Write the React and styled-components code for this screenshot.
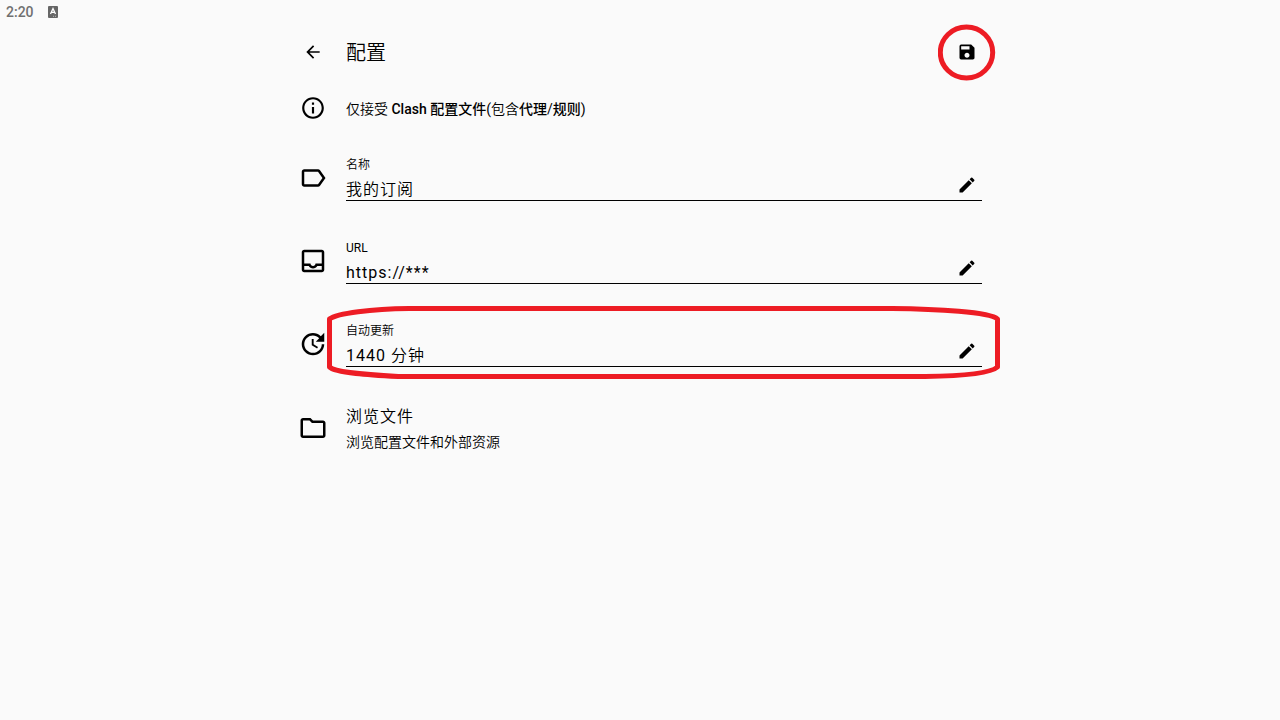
import React, { useState } from "react";
import styled, { createGlobalStyle } from "styled-components";
import {
  MdArrowBack,
  MdSave,
  MdInfoOutline,
  MdLabelOutline,
  MdUpdate,
  MdEdit,
} from "react-icons/md";

const GlobalStyle = createGlobalStyle`
  * { box-sizing: border-box; }
  body {
    margin: 0;
    background: #fafafa;
    color: #000;
    font-family: Roboto, "Noto Sans CJK SC DemiLight", "Noto Sans CJK SC", sans-serif;
    font-weight: 400;
  }
  svg { display: block; }
`;

const StatusBar = styled.div`
  display: flex;
  align-items: center;
  gap: 14px;
  height: 24px;
  padding: 0 6px;
  color: #707070;
  font-size: 14px;
  font-weight: 500;
  line-height: 24px;
`;

const Page = styled.main`
  width: 100%;
  max-width: 704px;
  margin: 0 auto;
  padding: 0 10px;
`;

const AppBar = styled.header`
  display: flex;
  align-items: center;
  gap: 18px;
  height: 56px;
`;

const Title = styled.h1`
  flex: 1;
  margin: 0;
  padding-top: 2px;
  font-size: 20px;
  font-weight: inherit;
  line-height: 28px;
`;

const IconButton = styled.button`
  position: relative;
  display: flex;
  align-items: center;
  justify-content: center;
  width: 30px;
  height: 30px;
  padding: 0;
  border: 0;
  background: none;
  color: #000;
  cursor: pointer;
`;

const EditButton = styled(IconButton)`
  grid-column: 2;
  grid-row: 1 / span 2;
  align-self: end;
`;

const Row = styled.div`
  position: relative;
  display: flex;
  align-items: center;
  gap: 18px;
  min-height: ${(p) => p.$height || 83}px;
`;

const RowIcon = styled.span`
  display: flex;
  flex: none;
  justify-content: center;
  width: 30px;
  padding-bottom: 1px;
`;

const Tip = styled.p`
  margin: 0;
  font-size: 14px;
  line-height: 20px;

  b {
    font-family: Roboto, "Noto Sans CJK SC", sans-serif;
    font-weight: 500;
  }
`;

const FieldBody = styled.div`
  display: grid;
  flex: 1;
  grid-template-columns: 1fr 30px;
  grid-template-rows: 16px 20px;
  row-gap: 7px;
  padding-top: 1px;
  border-bottom: 1px solid #000;
`;

const FieldLabel = styled.label`
  font-size: 12px;
  line-height: 16px;
`;

const FieldInput = styled.input`
  min-width: 0;
  width: 100%;
  height: 20px;
  padding: 0;
  border: 0;
  outline: 0;
  background: none;
  color: inherit;
  font: inherit;
  font-size: 16px;
  line-height: 20px;
  letter-spacing: 1px;
`;

const FilesLink = styled.a`
  display: flex;
  flex-direction: column;
  gap: 3px;
  color: inherit;
  text-decoration: none;
`;

const LinkTitle = styled.span`
  font-size: 16px;
  line-height: 24px;
  letter-spacing: 1px;
`;

const LinkSummary = styled.span`
  font-size: 14px;
  line-height: 20px;
`;

const CircleMark = styled.svg`
  position: absolute;
  top: -13px;
  left: -14px;
  width: 58px;
  height: 58px;
  pointer-events: none;
`;

const FieldMark = styled.svg`
  position: absolute;
  top: 3px;
  left: 29px;
  width: calc(100% - 11px);
  height: 73px;
  pointer-events: none;
`;

const InboxIcon = () => (
  <svg width="30" height="30" viewBox="0 0 24 24" fill="currentColor">
    <path d="M19 3H5c-1.100 0-2 .9-2 2v14c0 1.100.9 2 2 2h14c1.100 0 2-.9 2-2V5c0-1.100-.9-2-2-2zm0 16H5v-3h3.560c.690 1.190 1.970 2 3.450 2s2.750-.810 3.450-2H19v3zm0-5h-4.990c0 1.100-.9 2-2 2s-2-.9-2-2H5V5h14v9z" />
  </svg>
);

const FolderIcon = () => (
  <svg width="30" height="30" viewBox="0 0 24 24" fill="currentColor">
    <path d="M9.170 6l2 2H20v10H4V6h5.170M10 4H4c-1.100 0-1.990.9-1.990 2L2 18c0 1.100.9 2 2 2h16c1.100 0 2-.9 2-2V8c0-1.100-.9-2-2-2h-8l-2-2z" />
  </svg>
);

const KeyboardIcon = () => (
  <svg width="10" height="12" viewBox="0 0 10 12">
    <rect width="10" height="12" rx="1" fill="#666" />
    <path d="M2.500 8 5 2.500 7.500 8M3.500 6.300h3" fill="none" stroke="#fff" strokeWidth="1.300" />
    <path d="M5 10.300h1M7 10.300h1" stroke="#ddd" strokeWidth="0.700" />
  </svg>
);

function Field({ id, label, value, icon, children }) {
  const [text, setText] = useState(value);
  return (
    <Row>
      <RowIcon>{icon}</RowIcon>
      <FieldBody>
        <FieldLabel htmlFor={id}>{label}</FieldLabel>
        <FieldInput id={id} value={text} onChange={(e) => setText(e.target.value)} />
        <EditButton type="button" aria-label={label}>
          <MdEdit size={20} />
        </EditButton>
      </FieldBody>
      {children}
    </Row>
  );
}

export default function App() {
  return (
    <>
      <GlobalStyle />
      <StatusBar>
        <span>2:20</span>
        <KeyboardIcon />
      </StatusBar>
      <Page>
        <AppBar>
          <IconButton type="button" aria-label="返回">
            <MdArrowBack size={20} />
          </IconButton>
          <Title>配置</Title>
          <IconButton type="button" aria-label="保存">
            <MdSave size={20} />
            <CircleMark viewBox="0 0 58 58" aria-hidden="true">
              <ellipse cx="28.500" cy="28.500" rx="26.200" ry="25.500" fill="none" stroke="#ed1c24" strokeWidth="5" />
            </CircleMark>
          </IconButton>
        </AppBar>
        <Row $height={57}>
          <RowIcon><MdInfoOutline size={26} /></RowIcon>
          <Tip>
            仅接受 <b>Clash 配置文件</b>(包含<b>代理</b>/<b>规则</b>)
          </Tip>
        </Row>
        <Field id="name" label="名称" value="我的订阅" icon={<MdLabelOutline size={30} />} />
        <Field id="url" label="URL" value="https://***" icon={<InboxIcon />} />
        <Field id="interval" label="自动更新" value="1440 分钟" icon={<MdUpdate size={30} />}>
          <FieldMark viewBox="0 0 673 73" preserveAspectRatio="none" aria-hidden="true">
            <path
              d="M2.500 13C10 7 45 3 82 2.500H565C610 3 663 6 670.500 13V61C664 67 635 70 598 70.500H72C45 69 8 67 2.500 61Z"
              fill="none"
              stroke="#ed1c24"
              strokeWidth="5"
              strokeLinejoin="round"
            />
          </FieldMark>
        </Field>
        <Row $height={85}>
          <RowIcon><FolderIcon /></RowIcon>
          <FilesLink href="#files">
            <LinkTitle>浏览文件</LinkTitle>
            <LinkSummary>浏览配置文件和外部资源</LinkSummary>
          </FilesLink>
        </Row>
      </Page>
    </>
  );
}
